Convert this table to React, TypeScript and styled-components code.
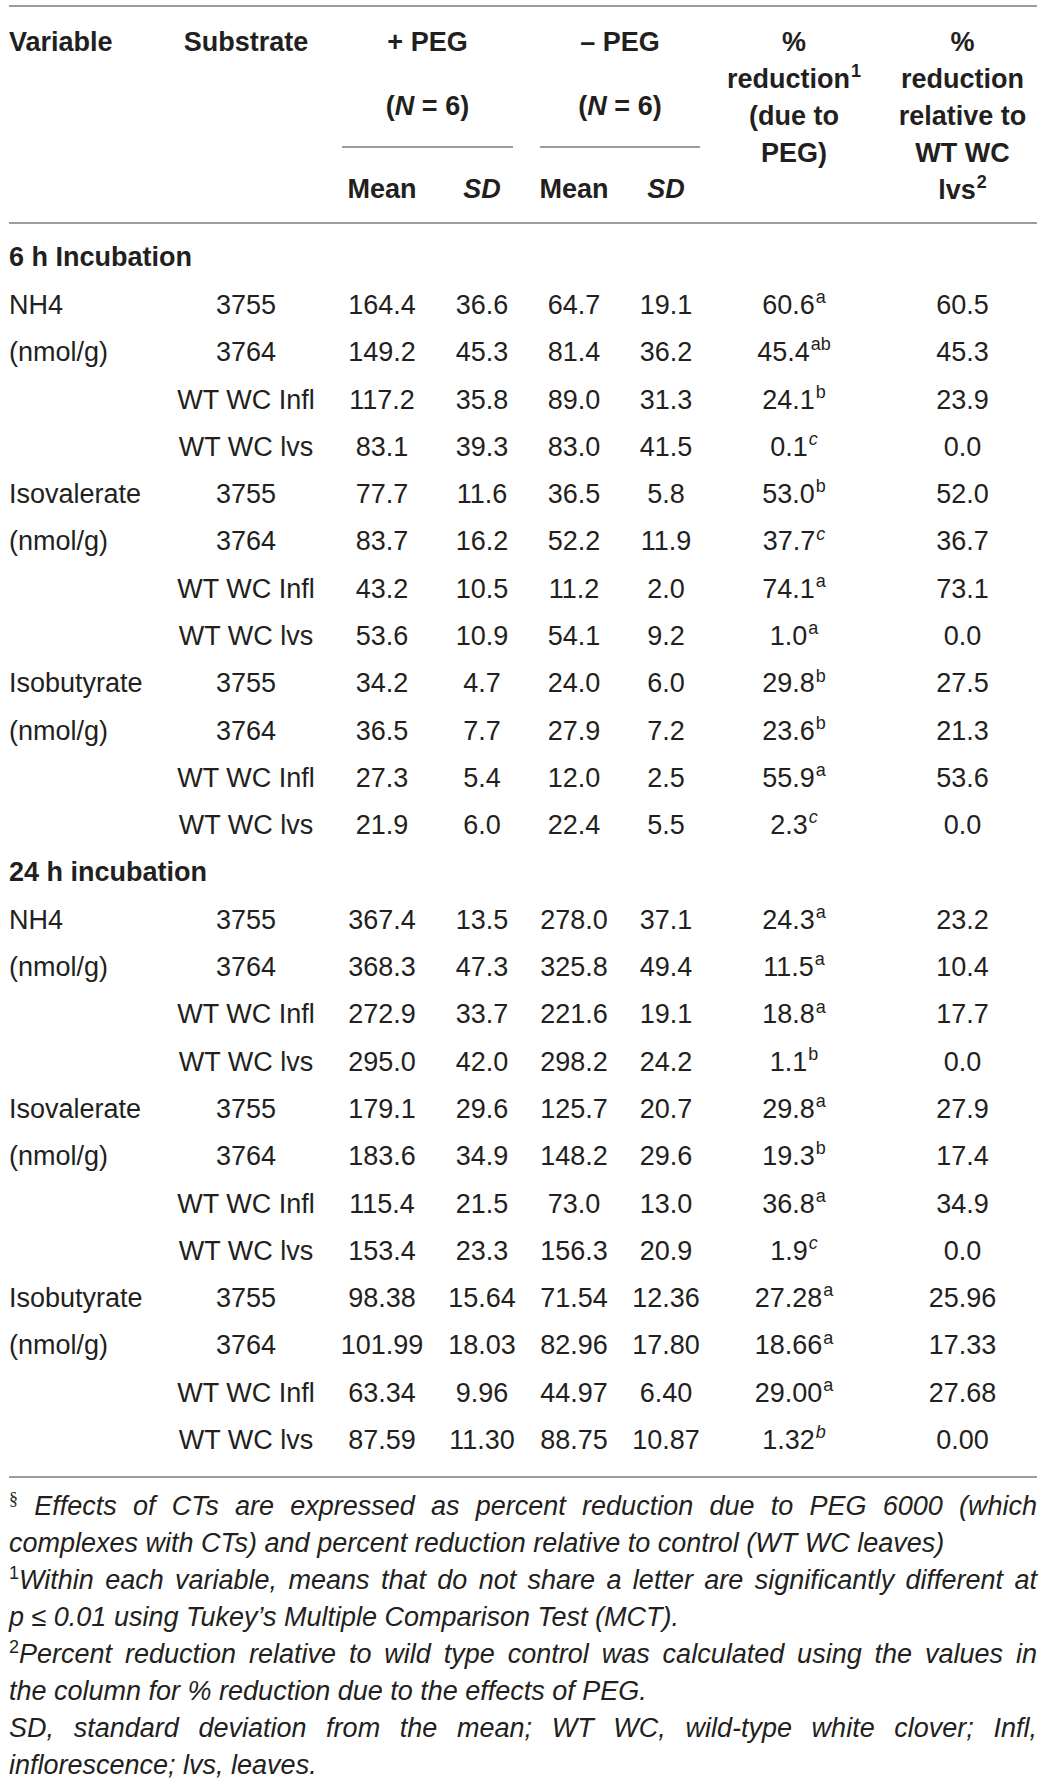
import React from "react";
import styled, { createGlobalStyle } from "styled-components";

type Row = {
  variable?: string;
  substrate: string;
  plus: [string, string];
  minus: [string, string];
  red: string;
  redSup: string;
  supItalic?: boolean;
  rel: string;
};

type Section = {
  title: string;
  rows: Row[];
};

const COLS = "167px 140px 132px 68px 116px 68px 188px 149px";
const RULE = "#9c9c9c";

const GlobalStyle = createGlobalStyle`
  body {
    margin: 0;
    background: #ffffff;
    color: #231f20;
    font-family: "Liberation Sans", Arial, Helvetica, sans-serif;
  }
`;

const Page = styled.div`
  width: 1043px;
  box-sizing: border-box;
  padding: 5px 6px 0 9px;
`;

const Table = styled.div`
  border-top: 2px solid ${RULE};
  border-bottom: 2px solid ${RULE};
`;

const Head = styled.div`
  display: grid;
  grid-template-columns: ${COLS};
  align-items: start;
  padding: 17px 0 13px;
  border-bottom: 2px solid ${RULE};
  font-size: 27px;
  font-weight: bold;
  line-height: 37px;
`;

const HeadCell = styled.div<{ $col: number; $left?: boolean }>`
  grid-column: ${(p) => p.$col};
  grid-row: 1 / span 2;
  text-align: ${(p) => (p.$left ? "left" : "center")};
  white-space: nowrap;
`;

const Group = styled.div<{ $col: number }>`
  grid-column: ${(p) => p.$col} / span 2;
  grid-row: 1;
  text-align: center;
`;

const GroupInner = styled.div<{ $l: number; $r: number }>`
  margin: 0 ${(p) => p.$r}px 0 ${(p) => p.$l}px;
  padding-bottom: 21px;
  border-bottom: 2px solid ${RULE};
`;

const GroupLine = styled.div<{ $gap?: number }>`
  margin-top: ${(p) => p.$gap || 0}px;
`;

const SubHead = styled.div<{ $col: number }>`
  grid-column: ${(p) => p.$col};
  grid-row: 2;
  margin-top: 22px;
  text-align: center;
`;

const Body = styled.div`
  padding: 10px 0 12px;
  font-size: 27px;
`;

const SectionTitle = styled.div`
  height: 47.3px;
  line-height: 47.3px;
  font-weight: bold;
`;

const DataRow = styled.div`
  display: grid;
  grid-template-columns: ${COLS};
  height: 47.3px;
  align-items: center;
`;

const Cell = styled.div<{ $left?: boolean }>`
  display: flex;
  justify-content: ${(p) => (p.$left ? "flex-start" : "center")};
  white-space: nowrap;
`;

const CellText = styled.span`
  display: block;
  line-height: 32px;
`;

const Sup = styled.span<{ $italic?: boolean; $size?: number }>`
  font-size: ${(p) => p.$size || 18}px;
  font-style: ${(p) => (p.$italic ? "italic" : "normal")};
  vertical-align: 0.6em;
  line-height: 0;
  margin-left: 1px;
`;

const Notes = styled.div`
  padding-top: 10px;
  font-size: 27px;
  font-style: italic;
  line-height: 37px;
`;

const NoteLine = styled.div<{ $justify?: boolean }>`
  text-align: ${(p) => (p.$justify ? "justify" : "left")};
  text-align-last: ${(p) => (p.$justify ? "justify" : "left")};
`;

const NoteMark = styled.span<{ $serif?: boolean }>`
  font-style: normal;
  font-size: 18px;
  vertical-align: 0.55em;
  line-height: 0;
  font-family: ${(p) =>
    p.$serif ? '"Liberation Serif", "Times New Roman", serif' : "inherit"};
`;

const r = (
  variable: string,
  substrate: string,
  p1: string,
  p2: string,
  m1: string,
  m2: string,
  red: string,
  redSup: string,
  rel: string,
  supItalic = false
): Row => ({
  variable,
  substrate,
  plus: [p1, p2],
  minus: [m1, m2],
  red,
  redSup,
  rel,
  supItalic,
});

const sections: Section[] = [
  {
    title: "6 h Incubation",
    rows: [
      r("NH4", "3755", "164.4", "36.6", "64.7", "19.1", "60.6", "a", "60.5"),
      r("(nmol/g)", "3764", "149.2", "45.3", "81.4", "36.2", "45.4", "ab", "45.3"),
      r("", "WT WC Infl", "117.2", "35.8", "89.0", "31.3", "24.1", "b", "23.9"),
      r("", "WT WC lvs", "83.1", "39.3", "83.0", "41.5", "0.1", "c", "0.0", true),
      r("Isovalerate", "3755", "77.7", "11.6", "36.5", "5.8", "53.0", "b", "52.0"),
      r("(nmol/g)", "3764", "83.7", "16.2", "52.2", "11.9", "37.7", "c", "36.7", true),
      r("", "WT WC Infl", "43.2", "10.5", "11.2", "2.0", "74.1", "a", "73.1"),
      r("", "WT WC lvs", "53.6", "10.9", "54.1", "9.2", "1.0", "a", "0.0"),
      r("Isobutyrate", "3755", "34.2", "4.7", "24.0", "6.0", "29.8", "b", "27.5"),
      r("(nmol/g)", "3764", "36.5", "7.7", "27.9", "7.2", "23.6", "b", "21.3"),
      r("", "WT WC Infl", "27.3", "5.4", "12.0", "2.5", "55.9", "a", "53.6"),
      r("", "WT WC lvs", "21.9", "6.0", "22.4", "5.5", "2.3", "c", "0.0", true),
    ],
  },
  {
    title: "24 h incubation",
    rows: [
      r("NH4", "3755", "367.4", "13.5", "278.0", "37.1", "24.3", "a", "23.2"),
      r("(nmol/g)", "3764", "368.3", "47.3", "325.8", "49.4", "11.5", "a", "10.4"),
      r("", "WT WC Infl", "272.9", "33.7", "221.6", "19.1", "18.8", "a", "17.7"),
      r("", "WT WC lvs", "295.0", "42.0", "298.2", "24.2", "1.1", "b", "0.0"),
      r("Isovalerate", "3755", "179.1", "29.6", "125.7", "20.7", "29.8", "a", "27.9"),
      r("(nmol/g)", "3764", "183.6", "34.9", "148.2", "29.6", "19.3", "b", "17.4"),
      r("", "WT WC Infl", "115.4", "21.5", "73.0", "13.0", "36.8", "a", "34.9"),
      r("", "WT WC lvs", "153.4", "23.3", "156.3", "20.9", "1.9", "c", "0.0", true),
      r("Isobutyrate", "3755", "98.38", "15.64", "71.54", "12.36", "27.28", "a", "25.96"),
      r("(nmol/g)", "3764", "101.99", "18.03", "82.96", "17.80", "18.66", "a", "17.33"),
      r("", "WT WC Infl", "63.34", "9.96", "44.97", "6.40", "29.00", "a", "27.68"),
      r("", "WT WC lvs", "87.59", "11.30", "88.75", "10.87", "1.32", "b", "0.00", true),
    ],
  },
];

function PegGroup({ col, sign, l, rgt }: { col: number; sign: string; l: number; rgt: number }) {
  return (
    <Group $col={col}>
      <GroupInner $l={l} $r={rgt}>
        <GroupLine>{sign} PEG</GroupLine>
        <GroupLine $gap={27}>
          (<i>N</i> = 6)
        </GroupLine>
      </GroupInner>
    </Group>
  );
}

function App() {
  return (
    <Page>
      <GlobalStyle />
      <Table>
        <Head>
          <HeadCell $col={1} $left>
            Variable
          </HeadCell>
          <HeadCell $col={2}>Substrate</HeadCell>
          <PegGroup col={3} sign="+" l={26} rgt={3} />
          <PegGroup col={5} sign="–" l={24} rgt={0} />
          <SubHead $col={3}>Mean</SubHead>
          <SubHead $col={4}>
            <i>SD</i>
          </SubHead>
          <SubHead $col={5}>Mean</SubHead>
          <SubHead $col={6}>
            <i>SD</i>
          </SubHead>
          <HeadCell $col={7}>
            %<br />
            reduction<Sup>1</Sup>
            <br />
            (due to
            <br />
            PEG)
          </HeadCell>
          <HeadCell $col={8}>
            %<br />
            reduction
            <br />
            relative to
            <br />
            WT WC
            <br />
            lvs<Sup>2</Sup>
          </HeadCell>
        </Head>

        <Body>
          {sections.map((s) => (
            <React.Fragment key={s.title}>
              <SectionTitle>{s.title}</SectionTitle>
              {s.rows.map((row, i) => (
                <DataRow key={s.title + i}>
                  <Cell $left>
                    <CellText>{row.variable}</CellText>
                  </Cell>
                  <Cell>
                    <CellText>{row.substrate}</CellText>
                  </Cell>
                  <Cell>
                    <CellText>{row.plus[0]}</CellText>
                  </Cell>
                  <Cell>
                    <CellText>{row.plus[1]}</CellText>
                  </Cell>
                  <Cell>
                    <CellText>{row.minus[0]}</CellText>
                  </Cell>
                  <Cell>
                    <CellText>{row.minus[1]}</CellText>
                  </Cell>
                  <Cell>
                    <CellText>
                      {row.red}
                      <Sup $italic={row.supItalic}>{row.redSup}</Sup>
                    </CellText>
                  </Cell>
                  <Cell>
                    <CellText>{row.rel}</CellText>
                  </Cell>
                </DataRow>
              ))}
            </React.Fragment>
          ))}
        </Body>
      </Table>

      <Notes>
        <NoteLine $justify>
          <NoteMark $serif>§</NoteMark> Effects of CTs are expressed as percent reduction due to PEG 6000 (which
        </NoteLine>
        <NoteLine>complexes with CTs) and percent reduction relative to control (WT WC leaves)</NoteLine>
        <NoteLine $justify>
          <NoteMark>1</NoteMark>Within each variable, means that do not share a letter are significantly different at
        </NoteLine>
        <NoteLine>p ≤ 0.01 using Tukey’s Multiple Comparison Test (MCT).</NoteLine>
        <NoteLine $justify>
          <NoteMark>2</NoteMark>Percent reduction relative to wild type control was calculated using the values in
        </NoteLine>
        <NoteLine>the column for % reduction due to the effects of PEG.</NoteLine>
        <NoteLine $justify>
          SD, standard deviation from the mean; WT WC, wild-type white clover; Infl,
        </NoteLine>
        <NoteLine>inflorescence; lvs, leaves.</NoteLine>
      </Notes>
    </Page>
  );
}

export default App;
